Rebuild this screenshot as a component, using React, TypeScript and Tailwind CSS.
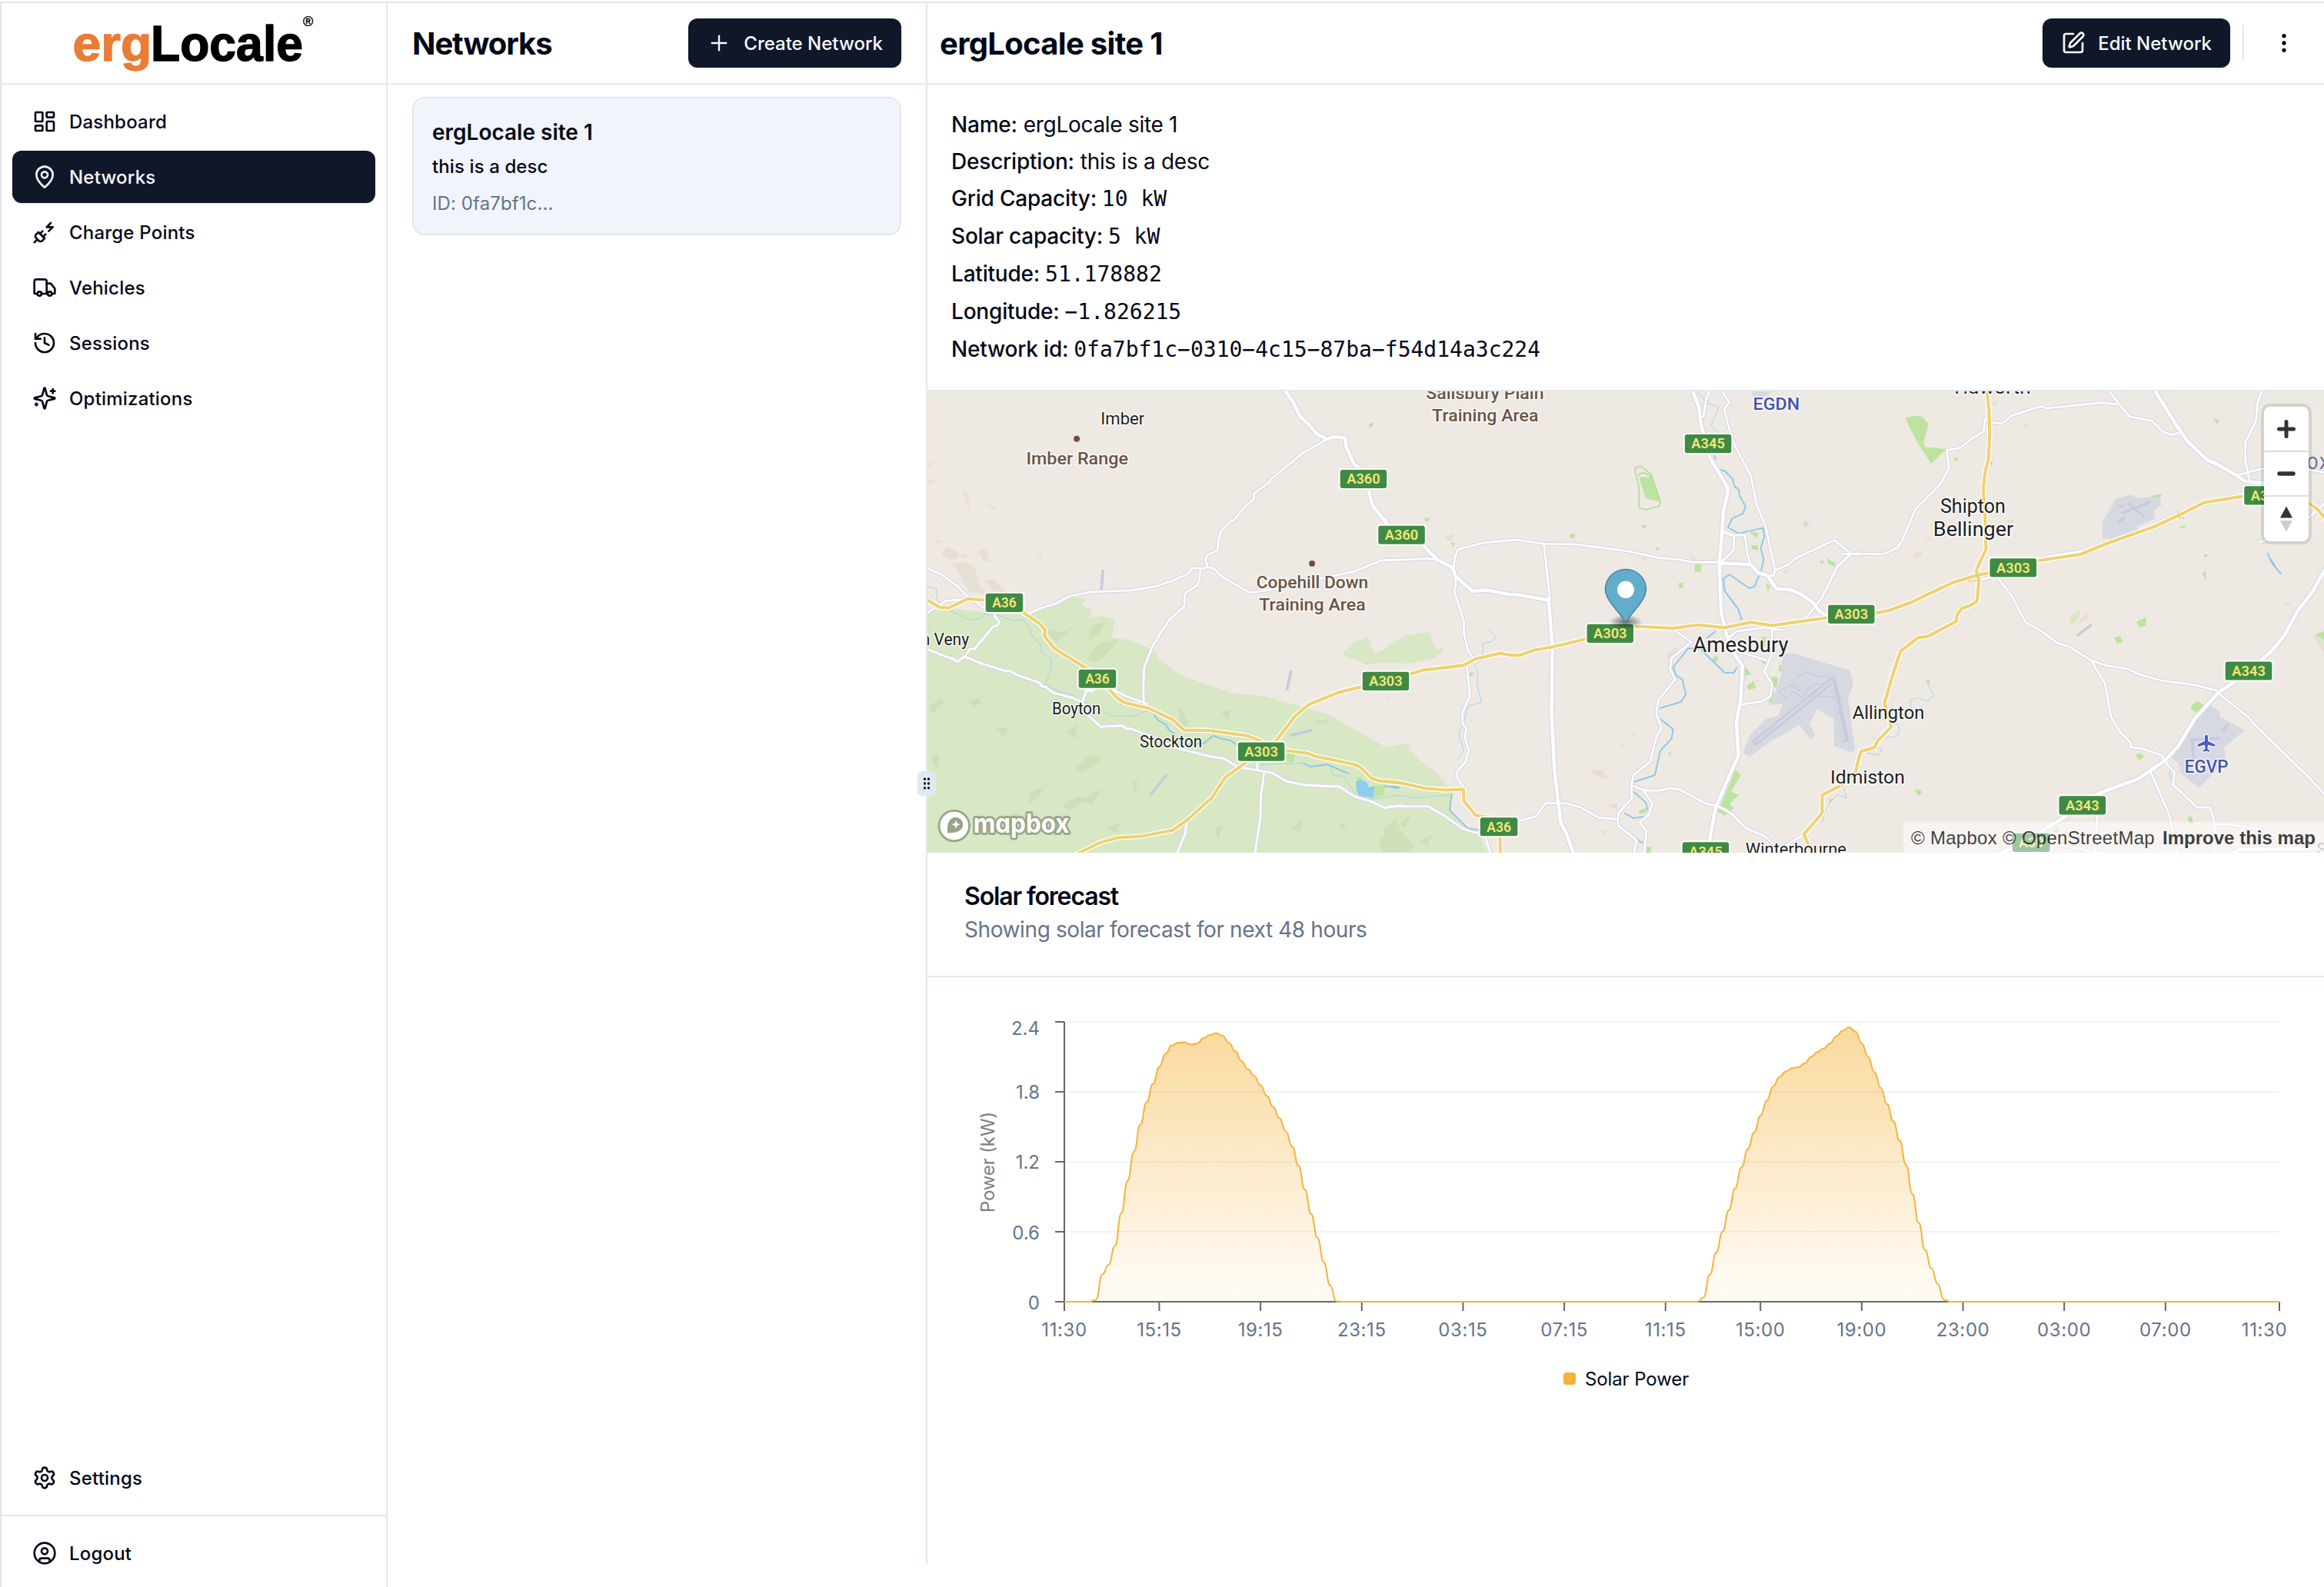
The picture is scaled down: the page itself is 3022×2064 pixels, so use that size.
import type { ReactNode } from "react";
import {
  CircleUser,
  EllipsisVertical,
  GripVertical,
  History,
  LayoutDashboard,
  MapPin,
  PlugZap,
  Plus,
  Settings,
  SquarePen,
  Truck,
} from "lucide-react";

/* ---------- Sidebar ---------- */

function SparkIcon() {
  return (
    <svg viewBox="0 0 24 24" className="size-8" fill="none" stroke="currentColor" strokeWidth="2" strokeLinecap="round" strokeLinejoin="round">
      <path d="M9.937 15.5A2 2 0 0 0 8.5 14.063l-6.135-1.582a.5.5 0 0 1 0-.962L8.5 9.936A2 2 0 0 0 9.937 8.5l1.582-6.135a.5.5 0 0 1 .963 0L14.063 8.5A2 2 0 0 0 15.5 9.937l6.135 1.581a.5.5 0 0 1 0 .964L15.5 14.063a2 2 0 0 0-1.437 1.437l-1.582 6.135a.5.5 0 0 1-.963 0z" />
      <path d="M20 3v4" />
      <path d="M22 5h-4" />
      <path d="M4 17v2" />
      <path d="M5 18H3" />
    </svg>
  );
}

function NavItem({ icon, label, active }: { icon: ReactNode; label: string; active?: boolean }) {
  return (
    <a
      className={
        active
          ? "flex h-[68px] items-center gap-4 rounded-xl bg-[#101728] px-[26px] text-[#f8fafc] shadow-sm"
          : "flex h-[68px] items-center gap-4 rounded-xl px-[26px]"
      }
    >
      {icon}
      <span className="pt-0.5 text-2xl font-medium tracking-[0.2px]">{label}</span>
    </a>
  );
}

function Logo() {
  return (
    <svg viewBox="0 0 500 104" className="h-[104px] w-[500px]" fontFamily="Liberation Sans, Arial, sans-serif" fontWeight="700">
      <g fontSize="64" strokeWidth="1.4" strokeLinejoin="round">
        <text x="92.5" y="75" textLength="103" lengthAdjust="spacingAndGlyphs" fill="#ea7d35" stroke="#ea7d35">erg</text>
        <text x="194" y="75" textLength="198" lengthAdjust="spacingAndGlyphs" fill="#000" stroke="#000">Locale</text>
      </g>
      <text x="392" y="29.5" fontSize="18" fontWeight="400" stroke="#000" strokeWidth="0.4">®</text>
    </svg>
  );
}

function Sidebar() {
  return (
    <aside className="flex w-[502px] shrink-0 flex-col border-r-2 border-[#e2e8f0]">
      <div className="h-[106px] shrink-0 border-b-2 border-[#e2e8f0]">
        <Logo />
      </div>
      <nav className="flex flex-1 flex-col gap-1 px-[14px] pt-[14px]">
        <NavItem icon={<LayoutDashboard className="size-8" />} label="Dashboard" />
        <NavItem icon={<MapPin className="size-8" />} label="Networks" active />
        <NavItem icon={<PlugZap className="size-8" />} label="Charge Points" />
        <NavItem icon={<Truck className="size-8" />} label="Vehicles" />
        <NavItem icon={<History className="size-8" />} label="Sessions" />
        <NavItem icon={<SparkIcon />} label="Optimizations" />
      </nav>
      <div className="px-[14px] pb-[14px]">
        <NavItem icon={<Settings className="size-8" />} label="Settings" />
      </div>
      <div className="border-t-2 border-[#e2e8f0] px-[14px] pt-[14px] pb-[10px]">
        <NavItem icon={<CircleUser className="size-8" />} label="Logout" />
      </div>
    </aside>
  );
}

/* ---------- Network list ---------- */

function DarkButton({ icon, children }: { icon: ReactNode; children: ReactNode }) {
  return (
    <button className="flex h-16 items-center gap-4 rounded-xl bg-[#101728] px-6 text-2xl font-medium whitespace-nowrap text-[#f8fafc] shadow">
      {icon}
      <span className="pt-0.5">{children}</span>
    </button>
  );
}

function NetworkList() {
  return (
    <section className="relative h-[2030px] w-[702px] shrink-0 border-r-2 border-[#e2e8f0]">
      <header className="flex h-[106px] items-center justify-between border-b-2 border-[#e2e8f0] px-8">
        <h1 className="pt-0.5 text-[40px] font-bold tracking-[-1.1px]">Networks</h1>
        <DarkButton icon={<Plus className="size-8" strokeWidth={1.75} />}>Create Network</DarkButton>
      </header>
      <div className="px-8 pt-4">
        <article className="flex h-[180px] flex-col rounded-2xl border-2 border-[#e2e8f0] bg-[#f1f4fa] p-6">
          <h2 className="text-[28px] leading-10 font-semibold">ergLocale site 1</h2>
          <p className="mt-[9px] text-2xl leading-8 font-medium tracking-[0.1px]">this is a desc</p>
          <p className="mt-4 text-2xl leading-8 tracking-[0.1px] text-[#64748b]">ID: 0fa7bf1c...</p>
        </article>
      </div>
      <div className="absolute top-[999px] -right-[13px] z-10 flex h-8 w-6 items-center justify-center rounded-md bg-[#e2e8f0]">
        <GripVertical className="size-5" />
      </div>
    </section>
  );
}

/* ---------- Map ---------- */

type Tile = {
  at: string;
  woods: string[];
  hills: string[];
  parks: string[];
  sand: string[];
  airfields: string[];
  runways: string;
  lakes: string;
  streams: string;
  rivers: string;
  minor: string;
  major: string;
  trunk: string;
};

const tiles: Tile[] = [
  {
    at: "translate(1200 500) scale(0.3954)",
    woods: [
      "0,738 60,745 100,738 200,750 330,755 430,720 500,700 535,705 525,728 557,742 545,770 590,763 632,772 622,832 690,843 772,882 768,898 845,955 930,985 1020,1016 1120,1024 1240,1058 1330,1085 1520,1192 1600,1182 1600,1560 0,1560",
      "1382,880 1425,845 1466,832 1474,865 1486,884 1515,872 1540,852 1600,842 1600,918 1510,915 1458,922 1420,905 1384,892",
    ],
    hills: [
      "540,905 580,850 645,838 610,880 570,915", "560,790 600,782 575,822 540,850", "400,805 460,815 490,800 440,850", "20,1060 60,1030 70,1045 30,1085",
      "150,1040 185,1030 195,1050 165,1060", "240,1130 280,1128 270,1160", "470,1140 510,1120 500,1165", "30,1220 50,1215 55,1262 38,1255",
      "500,1265 545,1220 590,1230 525,1275", "350,1345 400,1318 380,1360 350,1375", "460,1385 510,1355 540,1360 480,1402", "560,1340 585,1335 560,1378 520,1375",
      "835,1060 860,1080 875,1125 850,1120", "980,1075 1010,1072 1005,1110", "600,1460 650,1440 640,1475", "1370,1450 1395,1440 1380,1470",
      "1500,1500 1530,1480 1568,1520 1568,1545 1510,1540", "960,1460 985,1450 970,1500", "250,1440 300,1410 340,1420 280,1450", "1290,1110 1330,1100 1335,1112 1300,1120",
      "690,1310 705,1300 700,1355", "1210,1460 1250,1430 1240,1470",
    ],
    parks: ["1468,130 1474,124 1482,132 1474,142 1466,138", "1197,1210 1222,1208 1220,1243 1198,1240", "1485,1320 1520,1318 1515,1350 1485,1358", "1430,1292 1442,1290 1440,1302 1430,1302"],
    sand: [
      "62,558 78,535 115,550 118,572 85,575", "95,590 140,585 170,600 190,670 215,690 150,682 120,620", "180,545 210,545 220,585 200,580", "15,310 45,320 20,330", "35,510 75,515 50,525",
      "130,335 150,370 155,420 140,380", "215,395 240,405 238,412 215,402", "200,645 235,640 270,680 240,690", "18,260 38,255 20,275", "120,560 160,555 130,572", "375,575 392,562 390,575",
    ],
    airfields: [],
    runways: "M592 609 L587 678 M1211 942 L1197 1007 M1207 1155 L1281 1137 M748 1350 L802 1283",
    lakes: "1425,1305 1445,1300 1462,1310 1465,1325 1485,1320 1482,1360 1435,1355 1425,1330",
    streams:
      "M15 665 L45 672 48 710 90 745 135 765 160 775 190 770 200 755 250 760 300 778 330 772 352 800 355 820 390 860 385 880 422 903 420 945 403 985 440 1008 490 1020 530 1045 590 1070 615 1090 690 1090 745 1072 M1110 1250 L1250 1245 M1340 1255 L1350 1285 1385 1290 1410 1330 1440 1360 1470 1365 1568 1350",
    rivers: "M760 1085 L775 1105 800 1120 810 1138 830 1150 M860 1185 L925 1180 955 1155 980 1165 1010 1170 1030 1185 M1250 1245 L1275 1257 1330 1250 1400 1280 M1540 1325 L1570 1328",
    minor:
      "M1325 183 L1250 225 1145 312 1140 322 1090 358 1088 378 1060 400 1022 448 1015 448 980 485 972 515 970 545 935 562 930 578 936 600 M345 755 L390 735 440 720 480 697 550 683 690 677 770 663 830 642 875 622 885 603 920 606 936 602 955 604 985 633 1075 685 1160 673 1300 640 1420 615 1510 578 1575 577 M912 610 L910 645 900 662 862 688 860 730 810 775 780 820 755 862 728 930 725 1000 727 1045 M0 597 L60 625 110 660 145 695 200 735 M0 760 L75 712 145 705 M235 755 L238 765 252 780 248 790 230 798 170 870 155 870 138 895 112 912 100 902 80 897 0 865 M138 895 L185 915 270 942 285 942 310 955 385 982 390 992 405 995 430 1015 490 1030 525 1045 545 1090 585 1126 655 1122 668 1132 685 1132 730 1150 830 1195 950 1225 990 1230 1030 1255 1060 1262 1150 1278 1195 1305 1260 1318 1370 1323 1420 1355 1475 1372 1520 1393 1575 1384 M525 1045 L537 1008 565 1008 M620 1000 L660 1022 740 1052 M1122 1278 L1118 1310 1112 1350 1110 1425 1092 1545 M868 1445 L862 1480 835 1545 M1100 1240 L1100 1268",
    major: "M1188 15 L1218 58 1240 105 1268 130 1295 162 1328 180 1350 172 1390 176 1392 205 1418 262 1440 280 1465 345 1478 395 1530 465 1560 500",
    trunk:
      "M0 700 L55 733 85 735 148 705 210 710 268 715 330 750 385 788 402 808 400 828 435 870 545 938 615 1005 640 1032 665 1047 745 1066 822 1103 858 1137 940 1138 1065 1155 1110 1172 1140 1195 1215 1207 1265 1213 1290 1223 1420 1250 1440 1260 1475 1295 1500 1304 1575 1311 M500 1548 L580 1508 640 1491 720 1486 820 1467 870 1432 950 1360 995 1292 1060 1245 1110 1210 1165 1168 1225 1090 1270 1052 1370 1012 1450 993 1575 975",
  },
  {
    at: "translate(1800 500) scale(0.3954)",
    woods: [
      "48,1183 65,1182 112,1232 172,1278 200,1310 228,1345 215,1400 275,1463 312,1476 345,1560 48,1560",
      "40,840 75,825 152,815 160,850 170,872 200,862 185,885 165,900 110,912 40,918",
    ],
    hills: ["0,1455 40,1430 55,1470 100,1520 60,1545 0,1545", "120,1500 160,1480 140,1520", "50,1445 90,1410 70,1460"],
    parks: [
      "838,305 878,305 908,385 860,375", "1155,1268 1172,1285 1140,1340 1168,1350 1135,1380 1150,1395 1120,1418 1097,1405",
      "132,440 148,438 146,450 136,450", "218,520 234,522 226,534", "845,462 862,462 858,472 848,472", "890,538 905,535 900,548",
      "1022,592 1044,594 1040,617 1020,614", "966,655 984,650 982,670 972,670", "1256,655 1270,660 1262,685", "1430,578 1448,582 1440,592",
      "1455,572 1485,588 1480,600 1460,590", "1208,530 1228,528 1230,545 1208,542", "1200,485 1232,488 1225,505", "1170,960 1188,930 1208,955",
      "1192,990 1215,975 1222,998 1198,1005", "1297,925 1320,918 1315,945 1298,944", "1275,960 1295,965 1290,1000 1272,985", "1262,1045 1280,1005 1285,1030 1268,1050",
      "1075,905 1092,890 1100,905 1085,918", "1238,910 1256,908 1252,922", "280,948 293,948 292,960 280,960", "932,1215 940,1205 945,1220", "1240,830 1255,830 1252,865 1240,860",
      "838,1402 862,1392 860,1410 838,1412", "610,492 628,492 626,506 610,506", "862,1520 878,1522 875,1545 862,1545", "1460,1365 1475,1362 1468,1376",
    ],
    sand: [
      "200,500 228,490 225,515 210,512", "1003,555 1025,570 1015,582", "848,568 865,570 860,582 848,580", "678,1270 712,1265 740,1300 700,1290", "925,890 960,865 975,872 940,912",
      "700,1465 730,1470 725,1480", "1312,612 1335,605 1330,618 1315,622", "760,1175 790,1185 785,1192", "732,1385 765,1375 768,1400", "1175,965 1195,960 1190,975", "1218,975 1235,965 1232,980",
      "812,1145 830,1150 820,1158", "8,1030 18,1025 16,1042", "1486,600 1500,600 1490,620",
    ],
    airfields: [
      "1310,890 1340,883 1530,940 1543,985 1525,1030 1548,1200 1535,1210 1480,1190 1478,1100 1425,1068 1398,1115 1418,1155 1402,1167 1365,1120 1270,1175 1200,1225 1180,1210 1205,1150 1255,1100 1295,1090 1312,1050 1270,1055 1305,960",
      "1210,22 1280,22 1245,42 1208,38", "1375,455 1390,448 1398,458 1385,472",
    ],
    runways: "M1215 1182 L1475 972 M1475 972 L1518 1175",
    lakes: "",
    streams:
      "M1030 25 L1060 60 1100 75 1075 135 1095 155 M345 808 L368 830 355 845 325 852 322 905 295 925 308 945 305 985 320 1045 275 1058 265 1100 245 1150 262 1205 240 1235 M50 1352 L100 1360 215 1350 M1510 1320 L1520 1360 1490 1350 1470 1370 1450 1400 1440 1440",
    rivers:
      "M1085 232 L1090 248 M1105 280 L1120 285 1145 310 1152 335 1165 345 1170 370 1188 400 1180 425 1145 440 1130 470 1165 490 1245 472 1250 500 1238 540 1248 575 1240 610 1218 665 1200 670 1135 625 1115 640 1120 680 1165 740 1175 775 M1160 930 L1150 948 1120 948 1075 905 1040 870 1000 868 950 930 960 958 980 970 992 1020 975 1045 905 1065 M908 1100 L950 1135 945 1165 908 1205 890 1285 820 1308 M815 1335 L860 1375 868 1405 M790 1410 L820 1427 860 1420 M222 1345 L215 1400 275 1460 312 1465 M0 1322 L50 1325 M1090 812 L1060 835 M805 1475 L850 1510",
    minor:
      "M0 578 L70 576 140 572 175 577 M1070 20 L1058 50 1050 105 1043 108 M1110 20 L1135 60 1118 80 1130 130 1150 195 1205 300 1225 395 1255 470 1285 610 1280 630 1262 628 M228 603 L232 570 242 543 325 521 435 511 525 524 630 526 800 548 900 570 970 576 1010 584 1100 585 M525 524 L545 710 M230 615 L236 655 230 680 262 780 262 820 275 875 295 905 M272 928 L282 1025 257 1080 258 1118 270 1130 265 1160 278 1205 268 1240 238 1275 240 1295 262 1325 M1115 485 L1150 500 1150 545 1110 582 M1120 485 L1150 497 1185 495 1195 560 1205 590 M1285 612 L1330 592 1350 573 1480 512 1535 557 1568 556 M1535 557 L1490 600 1440 700 1390 765 M955 808 L1010 848 945 900 940 935 957 970 900 1040 895 1085 912 1130 895 1160 875 1240 820 1285 812 1320 815 1360 770 1410 768 1450 830 1500 820 1545 M812 1318 L855 1335 905 1336 940 1328 970 1332 1060 1380 1095 1385 1140 1410 1190 1460 1250 1485 1300 1530 1380 1480 M850 1330 L882 1380 870 1415 840 1440 862 1470 855 1545 M445 1435 L500 1420 530 1377 600 1378 650 1393 705 1425 770 1430 M1130 835 L1160 812 1250 800 1310 808 M1275 795 L1275 885 1250 945 1275 985 1270 1025 1240 1043 1170 1053 M1150 875 L1260 908 M0 1392 L25 1387 145 1388 200 1420 260 1462 290 1472 330 1480 350 1545",
    major:
      "M0 440 L20 478 M128 530 L175 577 225 603 235 632 290 680 335 676 410 690 440 692 540 710 M1012 15 L1035 75 1040 125 1070 240 1130 340 1128 365 1115 420 1110 500 1102 590 1108 750 1125 820 1140 870 1178 925 1172 1040 1158 1110 1165 1220 1090 1390 1070 1500 M1102 588 L1205 592 1230 620 1260 628 1290 672 1335 675 1370 690 1410 718 1430 745 1460 762 M540 700 L553 865 550 1080 560 1270 580 1440 598 1475 625 1550",
    trunk:
      "M0 1304 L60 1312 130 1328 200 1334 260 1332 262 1370 300 1417 340 1422 380 1450 382 1548 M60 958 L85 953 125 940 260 924 300 903 382 884 410 890 445 891 495 874 560 862 660 838 760 810 840 796 950 802 1030 791 1120 800 1205 782 1275 793 1460 767 1568 750 M1500 1320 L1440 1350 1440 1410 1380 1480 1395 1515",
  },
  {
    at: "translate(2400 500) scale(0.3967)",
    woods: ["733,780 738,755 768,738 765,760 745,788"],
    hills: [],
    parks: [
      "195,110 225,103 250,106 272,130 255,190 260,205 330,212 280,260 235,190", "355,240 368,240 366,250 355,250", "1000,365 1036,360 1025,383",
      "1205,115 1225,115 1218,132", "953,778 985,762 985,790 965,797", "880,830 900,825 908,845 890,850", "1135,1050 1155,1038 1175,1055 1150,1078 1132,1065",
      "950,1215 965,1208 978,1220 962,1232", "225,1330 245,1328 250,1340 240,1350", "1120,1420 1132,1415 1140,1438 1128,1440", "1168,620 1180,612 1182,640",
      "1088,468 1112,462 1112,472", "472,255 482,252 480,270", "1175,555 1190,560 1175,568", "1540,820 1568,808 1568,840", "265,970 276,968 274,982", "682,1462 698,1450 695,1470",
    ],
    sand: [
      "770,770 798,745 795,765 765,788", "582,125 596,135 592,150", "220,560 245,542 250,560 225,572", "480,55 497,55 497,70 482,70", "355,115 370,108 370,118",
      "528,444 555,446 550,455 528,455", "1438,715 1460,712 1450,726", "1532,828 1550,808 1568,840 1568,880", "262,500 280,510 268,512", "482,320 492,322 490,332", "1085,1265 1100,1258 1098,1275",
    ],
    airfields: [
      "842,505 842,450 885,375 935,362 960,372 1030,368 1035,395 1010,415 1015,440 955,465 960,480 880,507",
      "1190,1050 1225,1070 1228,1090 1308,1133 1240,1190 1245,1225 1215,1265 1158,1322 1105,1280 1090,1240 1055,1215",
    ],
    runways: "M905 422 L1000 385 M925 390 L980 435 M895 450 L915 435 M895 400 L912 398 M1135 1165 L1142 1240 M1125 1165 L1230 1160 M1235 1135 L1255 1115 M758 824 L806 788",
    lakes: "",
    streams: "M262 967 L290 1020 270 1038 235 1027 210 1035 215 1060 M165 1110 L178 1130 165 1155 90 1160 M95 1185 L118 1195 110 1215 70 1208 M1060 1270 L1075 1320 1110 1350",
    rivers: "M1382 552 L1400 590 1428 622 M1385 560 L1410 600",
    minor:
      "M-10 556 L130 555 170 535 185 512 228 410 308 330 338 275 332 215 375 208 410 180 452 155 458 110 M480 125 L512 128 545 102 638 72 660 78 840 60 890 65 M862 20 L905 75 930 105 1005 120 1040 155 1070 165 1095 158 M1365 20 L1350 60 1345 120 1310 190 1310 250 1325 320 M1280 298 L1370 275 1450 270 1580 290 M500 635 L545 695 590 780 640 808 695 848 730 858 805 905 855 922 925 932 960 950 1040 972 1140 984 1222 1005 M805 905 L850 980 870 1090 900 1140 932 1172 937 1190 970 1193 1035 1215 1045 1232 1078 1275 1073 1312 1150 1385 1195 1388 1210 1440 1208 1545 M1000 1270 L1060 1410 1090 1545 M825 1400 L818 1545 M1222 1012 L1325 1095 1335 1110 1520 1290 1575 1350 M1210 1445 L1240 1440 1340 1455 1440 1490 M700 1510 L830 1535 M1355 518 L1400 500 1520 435 1580 380 M440 640 L500 628 M660 565 L780 545",
    major:
      "M1010 15 L1085 135 1120 185 1185 248 1215 260 1280 298 1310 318 1400 325 M480 1548 L560 1515 650 1460 740 1405 830 1340 955 1295 1045 1235 1090 1185 1145 1095 1222 1010 1290 965 1360 905 1395 875 1440 820 1480 745 1530 680 1580 590 M1250 1548 L1290 1525 1580 1520",
    trunk:
      "M50 760 L145 740 220 712 350 650 425 627 480 615 630 578 770 557 860 520 1010 467 1090 430 1175 387 1300 367 1420 365 1520 390 1545 408 1585 455 M463 15 L470 85 472 165 468 245 457 290 451 340 457 440 460 540 428 610 437 640 431 710 410 724 380 735 365 755 362 777 270 826 238 830 180 874 155 950 127 1045 150 1122 105 1168 95 1190 50 1203 42 1230 32 1272 -15 1315",
  },
];

type Place = [text: string, x: number, y: number, width: number, size: number, tone: "town" | "area" | "air"];

const toneFill = { town: "#1c1e22", area: "#6b5443", air: "#4552ad" };

const places: Place[][] = [
  [
    ["Imber", 585, 131, 144, 54, "town"],
    ["Imber Range", 340, 262, 335, 57, "area"],
    ["Copehill Down", 1097, 670, 368, 57, "area"],
    ["Training Area", 1106, 743, 350, 57, "area"],
    ["n Veny", -6, 857, 158, 54, "town"],
    ["Boyton", 425, 1084, 160, 56, "town"],
    ["Stockton", 713, 1194, 205, 56, "town"],
  ],
  [
    ["Salisbury Plain", 137, 48, 388, 57, "area"],
    ["Training Area", 157, 121, 350, 57, "area"],
    ["EGDN", 1213, 84, 153, 58, "air"],
    ["Amesbury", 1015, 879, 314, 70, "town"],
    ["Idmiston", 1467, 1312, 245, 62, "town"],
    ["Winterbourne", 1188, 1547, 332, 56, "town"],
  ],
  [
    ["Tidworth", 345, 30, 262, 62, "town"],
    ["Shipton", 310, 422, 214, 64, "town"],
    ["Bellinger", 287, 496, 263, 64, "town"],
    ["Allington", 22, 1097, 236, 60, "town"],
    ["EGVP", 1111, 1274, 143, 58, "air"],
  ],
];

const shields: [label: string, cx: number, cy: number][][] = [
  [["A360", 1449, 311], ["A36", 268, 718], ["A36", 574, 968], ["A303", 1113, 1208]],
  [["A345", 1065, 195], ["A360", 57, 495], ["A303", 743, 819], ["A303", 5, 976], ["A303", 1536, 756], ["A36", 377, 1455], ["A345", 1057, 1536]],
  [["A303", 549, 601], ["A303", 1383, 364], ["A343", 1321, 939], ["A343", 776, 1380], ["A30", 608, 1502], ["A30", 1086, 1570]],
];

function MapCanvas() {
  return (
    <svg viewBox="1206 509 1816 600" className="block h-[600px] w-full bg-[#eee9e3]" strokeLinejoin="round" fill="none">
      <defs>
        <radialGradient id="pinShadow">
          <stop offset="0.1" stopColor="#000" stopOpacity="0.5" />
          <stop offset="1" stopColor="#000" stopOpacity="0" />
        </radialGradient>
      </defs>
      {tiles.map((t) => (
        <g key={t.at} transform={t.at}>
          {t.woods.map((p) => <polygon key={p} points={p} fill="#d8e7c4" />)}
          {t.hills.map((p) => <polygon key={p} points={p} fill="#d0dfba" />)}
          {t.sand.map((p) => <polygon key={p} points={p} fill="#e5e0d3" />)}
          {t.parks.map((p) => <polygon key={p} points={p} fill="#bce3a0" />)}
          {t.airfields.map((p) => <polygon key={p} points={p} fill="#d6d9e1" />)}
          <path d={t.runways} stroke="#c8cbdd" strokeWidth="9" />
          <polygon points={t.lakes} fill="#8ccdf0" />
          <path d={t.streams} stroke="#a6d2e8" strokeWidth="2.5" />
          <path d={t.rivers} stroke="#86c6ea" strokeWidth="4.5" />
        </g>
      ))}
      <g transform={tiles[1].at}>
        <path d="M826 290 Q820 266 848 272 L878 295 L908 385 L904 400 L858 412 L838 405 L838 340 Z M835 300 Q850 280 878 305" stroke="#b0dc92" strokeWidth="4" />
        <path d="M1215 1182 L1475 972 L1518 1175" stroke="#c8cbdd" strokeWidth="22" />
        <path d="M1222 1176 L1470 976 L1512 1170" stroke="#d6d9e1" strokeWidth="7" />
        <path d="M1300 1010 L1320 1035 1345 1010 1375 1030 1395 1000 M1355 965 L1385 945 1420 960 1460 962 M1335 990 L1400 1025 1510 1030 M1390 1000 L1420 985 1445 985 M1300 1010 L1345 985 1375 1000" stroke="#c8cbdd" strokeWidth="4" />
      </g>
      {tiles.map((t) => (
        <g key={t.at} transform={t.at}>
          <path d={t.minor} stroke="#d9dae7" strokeWidth="13" />
          <path d={t.major} stroke="#d9dae7" strokeWidth="18" />
        </g>
      ))}
      {tiles.map((t) => (
        <g key={t.at} transform={t.at}>
          <path d={t.minor} stroke="#fff" strokeWidth="6.5" />
          <path d={t.major} stroke="#fff" strokeWidth="11" />
        </g>
      ))}
      {tiles.map((t) => (
        <path key={t.at} transform={t.at} d={t.trunk} stroke="#fff" strokeWidth="17" />
      ))}
      {tiles.map((t) => (
        <path key={t.at} transform={t.at} d={t.trunk} stroke="#eed271" strokeWidth="10.5" />
      ))}
      <path transform={tiles[2].at} d="M400 635 L405 645 440 643 M1088 412 L1092 438 1110 436" stroke="#eed271" strokeWidth="3" />
      {tiles.map((t, i) => (
        <g key={t.at} transform={t.at} fontFamily="Roboto, sans-serif">
          {places[i].map(([text, x, y, width, size, tone]) => (
            <text
              key={text + x}
              x={x}
              y={y}
              fontSize={size}
              fontWeight={tone === "town" ? 400 : 500}
              textLength={width}
              lengthAdjust="spacingAndGlyphs"
              fill={toneFill[tone]}
              stroke="#fff"
              strokeOpacity="0.75"
              strokeWidth="8"
              paintOrder="stroke"
            >
              {text}
            </text>
          ))}
          {shields[i].map(([label, cx, cy]) => {
            const w = label.length === 4 ? 154 : 124;
            return (
              <g key={label + cx}>
                <rect x={cx - w / 2 - 2} y={cy - 33} width={w + 4} height="66" rx="10" fill="#408b43" stroke="#fff" strokeWidth="5" />
                <text x={cx} y={cy + 16} fontSize="45" fontWeight="600" textAnchor="middle" textLength={w - 44} lengthAdjust="spacingAndGlyphs" fill="#f7e57e">
                  {label}
                </text>
              </g>
            );
          })}
        </g>
      ))}
      <g transform={tiles[0].at}>
        <circle cx="506" cy="179" r="10" fill="#734f3a" />
        <circle cx="1280" cy="589" r="10" fill="#734f3a" />
        <circle cx="103" cy="1452" r="50" fill="#fff" stroke="#98a487" strokeWidth="7" />
        <path d="M81 1475 C78 1440 90 1424 108 1424 C122 1424 132 1435 132 1448 C132 1466 114 1477 81 1475 Z" fill="#98a487" />
        <path d="M109 1433 L113 1443 L123 1447 L113 1451 L109 1461 L105 1451 L95 1447 L105 1443 Z" fill="#fff" />
        <text
          x="166"
          y="1475"
          fontSize="86"
          fontFamily="Inter, sans-serif"
          fontWeight="700"
          textLength="316"
          lengthAdjust="spacingAndGlyphs"
          fill="#fff"
          stroke="#98a487"
          strokeWidth="14"
          paintOrder="stroke"
          className="[font-feature-settings:'cv11']"
        >
          mapbox
        </text>
      </g>
      <g transform={tiles[1].at}>
        <ellipse cx="794" cy="781" rx="56" ry="24" fill="url(#pinShadow)" />
        <path d="M794 783 C780 755 727 712 727 674 A67 66 0 1 1 861 674 C861 712 808 755 794 783 Z" fill="#62aeca" stroke="#478297" strokeWidth="3.5" />
        <circle cx="794" cy="675" r="28" fill="#fff" />
      </g>
      <g transform={tiles[2].at} fontFamily="Roboto, sans-serif">
        <path
          transform="translate(1154 1147) scale(2.35)"
          d="M12 0.5 c1.6 0 2.2 1.6 2.2 3.2 v5.6 l10 4.8 v3 l-10 -2.4 -0.6 5.6 3 2.2 v1.8 l-4.6 -1 -4.6 1 v-1.8 l3 -2.2 -0.6 -5.6 -10 2.4 v-3 l10 -4.8 v-5.6 c0 -1.6 0.6 -3.2 2.2 -3.2 z"
          fill="#4b5ac8"
          stroke="#fff"
          strokeWidth="2.4"
          paintOrder="stroke"
        />
        <text x="1512" y="277" fontSize="54" letterSpacing="4" fill="#5f6798">OX</text>
        <text x="1544" y="1543" fontSize="54" fill="#999">S</text>
      </g>
    </svg>
  );
}

function MapPanel() {
  return (
    <div className="relative h-[602px] border-t-2 border-[#e2e8f0]">
      <MapCanvas />
      <div className="absolute top-5 right-5 w-[58px] divide-y-2 divide-[#ddd] overflow-hidden rounded-lg bg-white ring-4 ring-black/10">
        <div className="flex h-[59px] items-center justify-center">
          <svg viewBox="0 0 24 24" className="size-6" stroke="#333" strokeWidth="5" strokeLinecap="round">
            <path d="M12 2.5v19M2.5 12h19" />
          </svg>
        </div>
        <div className="flex h-[58px] items-center justify-center">
          <svg viewBox="0 0 24 24" className="size-6" stroke="#333" strokeWidth="5.5" strokeLinecap="round">
            <path d="M3 12h18" />
          </svg>
        </div>
        <div className="flex h-[58px] items-center justify-center">
          <svg viewBox="0 0 16 36" className="h-9 w-4">
            <path d="M8 1.5 16 16.5H0z" fill="#333" />
            <path d="M8 34.5 16 20H0z" fill="#ccc" />
          </svg>
        </div>
      </div>
      <div className="absolute right-0 bottom-0 flex h-10 items-center gap-[10px] bg-white/50 pr-[11px] pl-[10px] font-['Liberation_Sans',Arial,sans-serif] text-2xl text-black/75">
        <span className="pt-0.5 tracking-[0.28px]">© Mapbox © OpenStreetMap</span>
        <span className="pt-0.5 font-bold tracking-[0.02px]">Improve this map</span>
      </div>
    </div>
  );
}

/* ---------- Solar chart ---------- */

const POINTS = 193;
const X0 = 178;
const X1 = 1758;
const Y0 = 422;
const STEP = 91;

const dayOne = [
  0.018, 0.233, 0.318, 0.478, 0.76, 1.038, 1.286, 1.519, 1.71, 1.867, 2.013, 2.128, 2.2, 2.222, 2.225, 2.206, 2.215, 2.261, 2.288, 2.303, 2.279, 2.219,
  2.149, 2.064, 1.995, 1.937, 1.858, 1.765, 1.671, 1.574, 1.462, 1.332, 1.168, 0.962, 0.754, 0.548, 0.339, 0.139, 0.003,
];
const dayTwo = [
  0.036, 0.232, 0.42, 0.599, 0.785, 0.972, 1.153, 1.308, 1.451, 1.594, 1.725, 1.846, 1.927, 1.975, 2.002, 2.011, 2.045, 2.1, 2.141, 2.172, 2.216, 2.277,
  2.325, 2.354, 2.316, 2.216, 2.102, 1.97, 1.834, 1.694, 1.546, 1.383, 1.174, 0.924, 0.677, 0.445, 0.288, 0.154, 0.018,
];

const series = Array.from({ length: POINTS }, (_, i) => dayOne[i - 5] ?? dayTwo[i - 101] ?? 0);

const px = (i: number) => X0 + (i * (X1 - X0)) / (POINTS - 1);
const py = (kw: number) => Y0 - (kw / 0.6) * STEP;

const curve = series
  .map((v, i) => {
    if (i === 0) return `M${px(0)} ${py(v)}`;
    const mid = (px(i) + px(i - 1)) / 2;
    return `C${mid} ${py(series[i - 1])} ${mid} ${py(v)} ${px(i)} ${py(v)}`;
  })
  .join(" ");

const xTicks: [number, string][] = [
  [0, "11:30"], [15, "15:15"], [31, "19:15"], [47, "23:15"], [63, "03:15"], [79, "07:15"], [95, "11:15"],
  [110, "15:00"], [126, "19:00"], [142, "23:00"], [158, "03:00"], [174, "07:00"], [192, "11:30"],
];
const yTicks: [number, string, number][] = [[0, "0", 431.5], [0.6, "0.6", 340.5], [1.2, "1.2", 249], [1.8, "1.8", 158], [2.4, "2.4", 75]];

function SolarChart() {
  return (
    <svg viewBox="0 0 1816 490" className="block h-[490px] w-full" fontFamily="Inter, sans-serif" fontSize="24">
      <defs>
        <linearGradient id="solar" x1="0" y1="0" x2="0" y2="1">
          <stop offset="0.05" stopColor="#f5b33c" stopOpacity="0.48" />
          <stop offset="0.95" stopColor="#f5b33c" stopOpacity="0.06" />
        </linearGradient>
      </defs>
      {yTicks.slice(1).map(([v]) => <path key={v} d={`M${X0} ${py(v)}H${X1}`} stroke="#f1f3f7" strokeWidth="2" />)}
      <path d={`M${X0} ${Y0}H${X1}`} stroke="#666" strokeWidth="2" />
      <path d={`M${X0} ${py(2.4)}V${Y0}`} stroke="#666" strokeWidth="2" />
      {yTicks.map(([v, label, ty]) => (
        <g key={label}>
          <path d={`M${X0 - 12} ${py(v)}H${X0}`} stroke="#666" strokeWidth="2" />
          <text x="146" y={ty} textAnchor="end" fill="#64748b">{label}</text>
        </g>
      ))}
      {xTicks.map(([i, label]) => (
        <g key={i}>
          <path d={`M${px(i)} ${Y0}v12`} stroke="#666" strokeWidth="2" />
          <text x={i === 192 ? 1738.5 : px(i)} y="467" textAnchor="middle" fill="#64748b" letterSpacing="0.6">{label}</text>
        </g>
      ))}
      <path d={`${curve} Z`} fill="url(#solar)" />
      <path d={curve} fill="none" stroke="#f5b33c" strokeWidth="2" />
      <text transform="translate(87 240.5) rotate(-90)" textAnchor="middle" fill="#808080" letterSpacing="-0.15">Power (kW)</text>
    </svg>
  );
}

/* ---------- Detail panel ---------- */

function Detail({ label, value, mono }: { label: string; value: string; mono?: boolean }) {
  return (
    <p className={mono ? "h-[41px] text-[28px] leading-10 whitespace-pre" : "h-10 text-[28px] leading-10"}>
      <span className="font-medium tracking-[-0.2px]">{label}:</span>{" "}
      <span className={mono ? "-ml-px font-['DejaVu_Sans_Mono',monospace]" : "tracking-[-0.3px]"}>{value}</span>
    </p>
  );
}

function NetworkDetail() {
  return (
    <main className="flex min-w-0 flex-1 flex-col">
      <header className="flex h-[106px] shrink-0 items-center border-b-2 border-[#e2e8f0] px-4">
        <h1 className="flex-1 pt-0.5 text-[40px] font-bold tracking-[-0.7px]">ergLocale site 1</h1>
        <DarkButton icon={<SquarePen className="size-8" />}>Edit Network</DarkButton>
        <div className="mx-4 h-12 w-0.5 bg-[#e2e8f0]" />
        <div className="flex w-[72px] justify-center">
          <EllipsisVertical className="size-8" />
        </div>
      </header>
      <div className="flex flex-col gap-2 py-8 pl-[31px]">
        <Detail label="Name" value="ergLocale site 1" />
        <Detail label="Description" value="this is a desc" />
        <Detail label="Grid Capacity" value="10 kW" mono />
        <Detail label="Solar capacity" value="5 kW" mono />
        <Detail label="Latitude" value="51.178882" mono />
        <Detail label="Longitude" value="−1.826215" mono />
        <Detail label="Network id" value="0fa7bf1c−0310−4c15−87ba−f54d14a3c224" mono />
      </div>
      <MapPanel />
      <div className="h-[162px] border-b-2 border-[#e2e8f0] px-12 pt-[41px]">
        <h2 className="text-[32px] leading-8 font-semibold tracking-[-1.15px]">Solar forecast</h2>
        <p className="mt-[7px] text-[28px] leading-10 tracking-[-0.4px] text-[#64748b]">Showing solar forecast for next 48 hours</p>
      </div>
      <SolarChart />
      <div className="mt-4 flex h-8 items-center justify-center gap-3 pl-px">
        <span className="size-4 rounded bg-[#f5b33c]" />
        <span className="pt-0.5 text-2xl tracking-[-0.1px]">Solar Power</span>
      </div>
    </main>
  );
}

export default function App() {
  return (
    <div className="h-[2064px] w-[3022px] overflow-hidden bg-white pt-0.5 font-['Inter',sans-serif] text-[#020817]">
      <div className="flex h-full border-t-2 border-l-2 border-[#e4e4ec]">
        <Sidebar />
        <NetworkList />
        <NetworkDetail />
      </div>
    </div>
  );
}
